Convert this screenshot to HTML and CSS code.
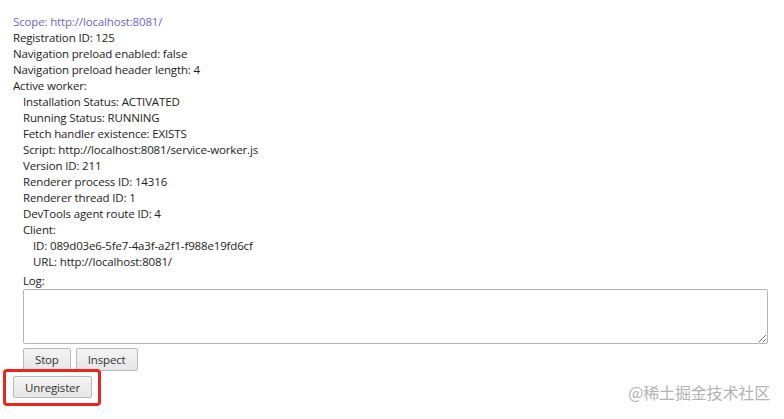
FILE: index.html
```html
<!DOCTYPE html>
<html lang="en">
<head>
    <meta charset="UTF-8">
    <meta name="viewport" content="width=device-width, initial-scale=1.0">
    <title>Service Worker</title>
    <link rel="stylesheet" href="styles.css">
</head>
<body>

<div class="registration">
    <div class="scope">Scope: http://localhost:8081/</div>
    <div>Registration ID: 125</div>
    <div>Navigation preload enabled: false</div>
    <div>Navigation preload header length: 4</div>
    <div>Active worker:</div>
    <div class="worker">
        <div>Installation Status: ACTIVATED</div>
        <div>Running Status: RUNNING</div>
        <div>Fetch handler existence: EXISTS</div>
        <div>Script: http://localhost:8081/service-worker.js</div>
        <div>Version ID: 211</div>
        <div>Renderer process ID: 14316</div>
        <div>Renderer thread ID: 1</div>
        <div>DevTools agent route ID: 4</div>
        <div>Client:</div>
        <div class="client">
            <div>ID: 089d03e6-5fe7-4a3f-a2f1-f988e19fd6cf</div>
            <div>URL: http://localhost:8081/</div>
        </div>
        <div class="log">
            <div>Log:</div>
            <textarea class="log-box"></textarea>
        </div>
        <div class="worker-actions">
            <button class="btn">Stop</button>
            <button class="btn">Inspect</button>
        </div>
    </div>
    <div class="unregister">
        <button class="btn">Unregister</button>
    </div>
</div>

<div class="watermark">@稀土掘金技术社区</div>

</body>
</html>
```

FILE: styles.css
```css
* {
    box-sizing: border-box;
}

body {
    margin: 0;
    padding: 14px 13px;
    font-family: "Open Sans", "Noto Sans", Arial, sans-serif;
    font-size: 11.5px;
    letter-spacing: -0.15px;
    line-height: 16px;
    color: #222;
    background: #fff;
}

.scope {
    color: #6c66c9;
}

.worker {
    margin-left: 10px;
}

.client {
    margin-left: 10px;
}

.log {
    margin-top: 3px;
}

.log-box {
    display: block;
    width: 745px;
    height: 55px;
    margin: 0;
    border: 1px solid #b4b4b4;
    border-radius: 2px;
    resize: both;
    font: inherit;
}

.worker-actions {
    display: flex;
    gap: 5px;
    margin-top: 4px;
}

.btn {
    height: 23px;
    padding: 0 11px;
    font-family: inherit;
    font-size: 11.5px;
    letter-spacing: -0.15px;
    color: #333;
    background: linear-gradient(#f4f4f4, #e6e6e6);
    border: 1px solid #b9b9b9;
    border-radius: 2px;
}

.unregister {
    display: inline-block;
    margin: -2px 0 0 -10px;
    padding: 4px 6px 5px 7px;
    border: 3px solid #e8281e;
    border-radius: 4px;
}

.unregister .btn {
    display: block;
    height: 22px;
}

.watermark {
    position: absolute;
    right: 14px;
    top: 384px;
    font-family: "Noto Sans CJK SC", sans-serif;
    font-size: 16px;
    color: #b3b3b3;
}
```
